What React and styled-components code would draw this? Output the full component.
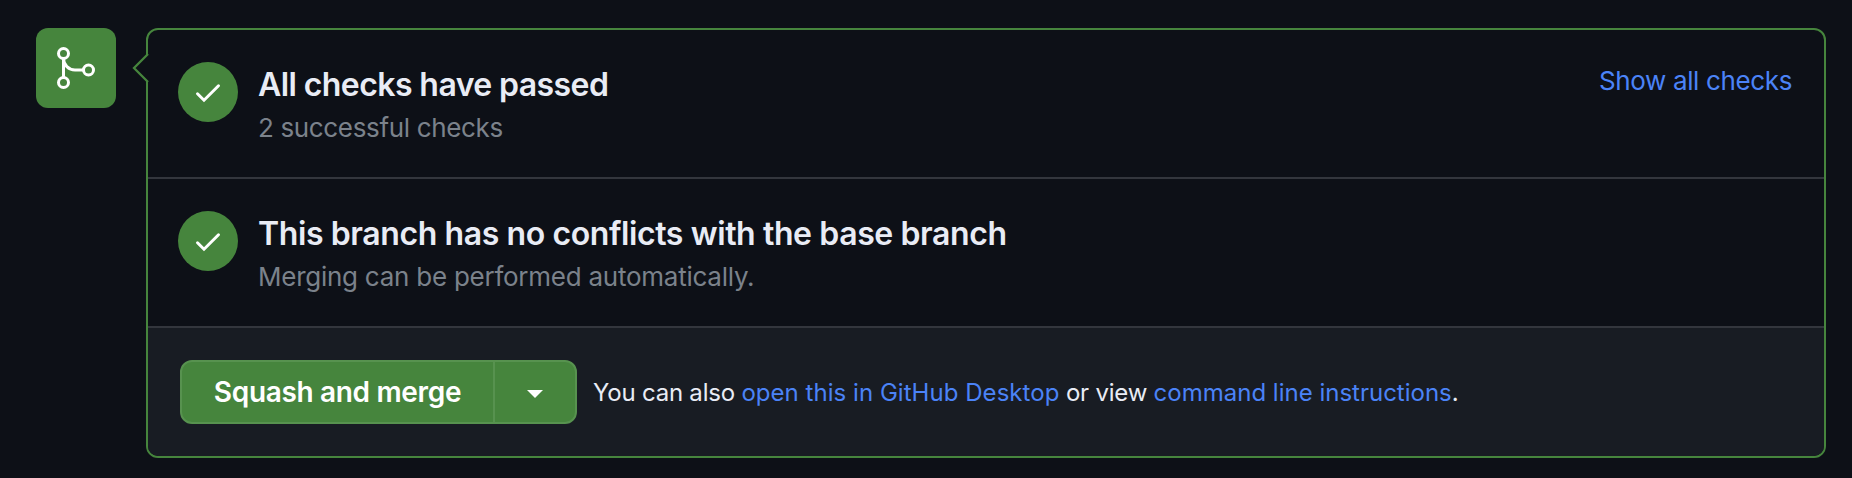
import React from "react";
import styled, { createGlobalStyle } from "styled-components";

const GlobalStyle = createGlobalStyle`
  * { box-sizing: border-box; }
  body {
    margin: 0;
    background: #0d1017;
    color: #e9ecf5;
    font-family: Inter, "Liberation Sans", sans-serif;
  }
`;

const Page = styled.main`
  display: flex;
  align-items: flex-start;
  gap: 30px;
  height: 478px;
  padding: 28px 26px 20px 36px;
`;

const MergeBadge = styled.div`
  display: flex;
  align-items: center;
  justify-content: center;
  flex: none;
  width: 80px;
  height: 80px;
  border-radius: 12px;
  background: #46853d;
`;

const Panel = styled.section`
  position: relative;
  display: flex;
  flex-direction: column;
  flex: 1;
  height: 430px;
  border: 2px solid #46853d;
  border-radius: 12px;
`;

const Pointer = styled.svg`
  position: absolute;
  left: -16px;
  top: 22px;
`;

const CheckRow = styled.div`
  display: flex;
  height: 149px;
  padding: 32px 32px 0 30px;
  border-bottom: 2px solid #33363d;
`;

const CheckCircle = styled.div`
  flex: none;
  width: 60px;
  height: 60px;
  margin-right: 20px;
  border-radius: 50%;
  background: #46853d;
`;

const CheckText = styled.div`
  flex: 1;
`;

const Title = styled.h3`
  margin: 0;
  font-size: 32px;
  font-weight: 600;
  line-height: 45px;
  letter-spacing: ${(p) => p.$tracking};
  white-space: nowrap;
`;

const Detail = styled.p`
  margin: 0;
  color: #7b828b;
  font-size: 26px;
  line-height: 41px;
  letter-spacing: ${(p) => p.$tracking};
  white-space: nowrap;
`;

const Link = styled.a`
  color: #4b83f7;
  letter-spacing: ${(p) => p.$tracking || "0px"};
  text-decoration: none;
`;

const ToggleLink = styled(Link)`
  font-size: 26px;
  line-height: 37px;
  white-space: nowrap;
`;

const Footer = styled.div`
  display: flex;
  align-items: center;
  flex: 1;
  padding: 0 32px;
  border-radius: 0 0 10px 10px;
  background: #181c23;
`;

const ButtonGroup = styled.div`
  display: flex;
  flex: none;
  width: 397px;
  height: 64px;
  margin-right: 16px;
  border: 2px solid #57924f;
  border-radius: 12px;
  background: #46853d;
`;

const MergeButton = styled.button`
  flex: 1;
  padding: 0;
  border: 0;
  border-right: 2px solid #57924f;
  background: none;
  color: #fff;
  font: 600 28px/56px Inter, "Liberation Sans", sans-serif;
  letter-spacing: -0.33px;
  white-space: nowrap;
`;

const MenuButton = styled.button`
  display: flex;
  align-items: center;
  justify-content: center;
  width: 80px;
  padding: 4px 0 0;
  border: 0;
  background: none;
`;

const Hint = styled.p`
  margin: 0;
  padding-top: 2px;
  font-size: 24px;
  line-height: 36px;
  letter-spacing: -0.22px;
  white-space: nowrap;
`;

function MergeIcon() {
  return (
    <svg width="48" height="48" viewBox="0 0 24 24" fill="none" stroke="#fff" strokeWidth="1.5">
      <circle cx="5.75" cy="4.75" r="2.5" />
      <circle cx="5.75" cy="19.25" r="2.5" />
      <circle cx="18.25" cy="13" r="2.5" />
      <path d="M5.75 7.25v9.5M5.75 7.25A5.75 5.75 0 0 0 11.5 13h4.25" />
    </svg>
  );
}

function CheckMark() {
  return (
    <CheckCircle>
      <svg width="60" height="60" viewBox="0 0 60 60" fill="none" stroke="#fff" strokeWidth="3" strokeLinecap="round">
        <path d="M19.5 31.8L26 38.2L40.5 23.8" />
      </svg>
    </CheckCircle>
  );
}

export default function App() {
  return (
    <>
      <GlobalStyle />
      <Page>
        <MergeBadge>
          <MergeIcon />
        </MergeBadge>
        <Panel>
          <Pointer width="18" height="32" viewBox="0 0 18 32">
            <path d="M16 2L2 16L16 30H18V2Z" fill="#0d1017" />
            <path d="M16 2L2 16L16 30" fill="none" stroke="#46853d" strokeWidth="2.3" />
          </Pointer>
          <CheckRow>
            <CheckMark />
            <CheckText>
              <Title $tracking="-0.58px">All checks have passed</Title>
              <Detail $tracking="-0.35px">2 successful checks</Detail>
            </CheckText>
            <ToggleLink $tracking="-0.37px">Show all checks</ToggleLink>
          </CheckRow>
          <CheckRow>
            <CheckMark />
            <CheckText>
              <Title $tracking="-0.4px">This branch has no conflicts with the base branch</Title>
              <Detail $tracking="-0.25px">Merging can be performed automatically.</Detail>
            </CheckText>
          </CheckRow>
          <Footer>
            <ButtonGroup>
              <MergeButton>Squash and merge</MergeButton>
              <MenuButton aria-label="Select merge method">
                <svg width="16" height="8" viewBox="0 0 16 8">
                  <path d="M0 0h16L8 8z" fill="#fff" />
                </svg>
              </MenuButton>
            </ButtonGroup>
            <Hint>
              You can also <Link $tracking="0.04px">open this in GitHub Desktop</Link> or view{" "}
              <Link>command line instructions</Link>.
            </Hint>
          </Footer>
        </Panel>
      </Page>
    </>
  );
}
